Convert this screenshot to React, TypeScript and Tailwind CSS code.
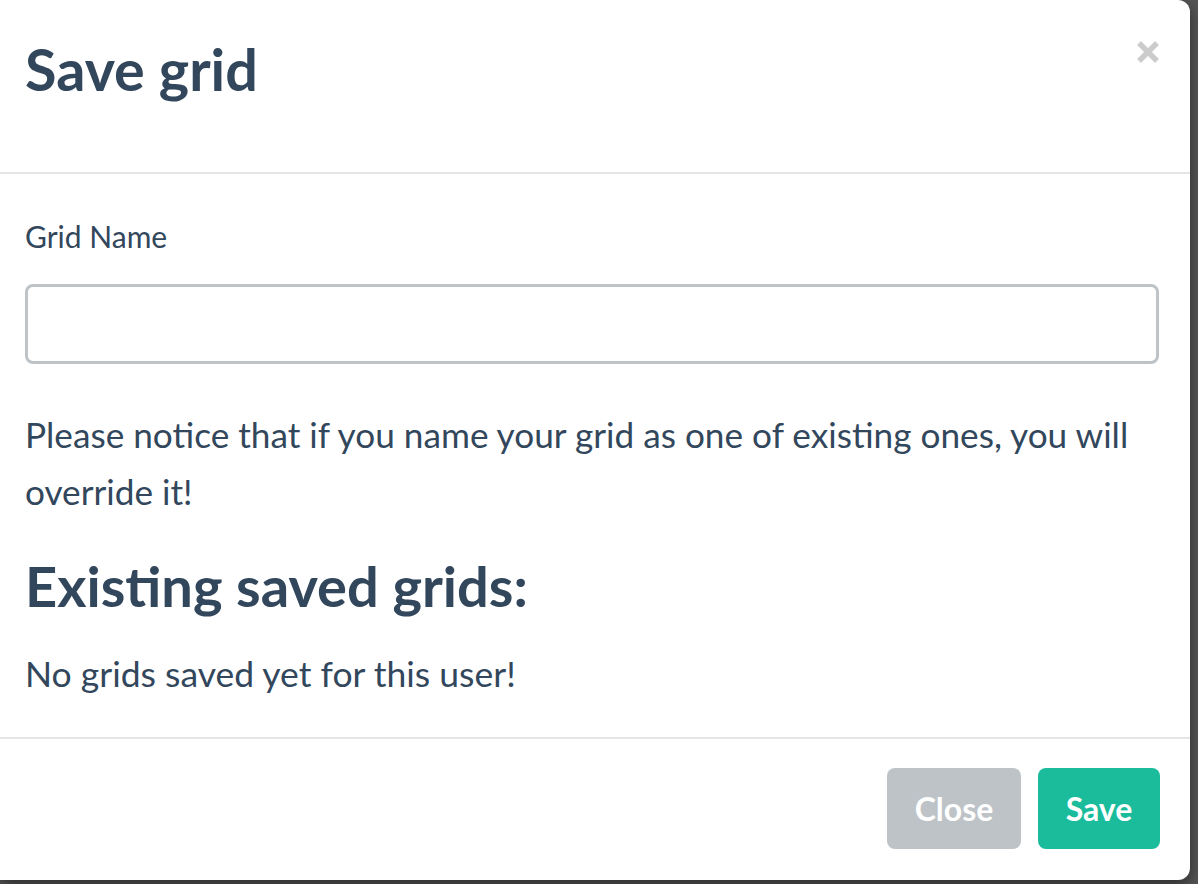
import React from "react";

const SaveGridModal: React.FC = () => {
  return (
    <div className="w-[1190px] h-[880px] bg-white rounded-tr-[12px] rounded-br-[12px] flex flex-col shadow-[0_5px_15px_rgba(0,0,0,0.5)] text-[#32475c] font-['Lato',sans-serif]">
      {/* Header */}
      <div className="h-[174px] shrink-0 border-b-2 border-[#e5e5e5] flex items-start justify-between pl-[25px] pr-[30px]">
        <h4 className="pt-[34px] text-[57.5px] leading-[1.2] font-bold">Save grid</h4>
        <button className="mt-[40px] w-[24px] h-[24px] flex items-center justify-center" aria-label="Close">
          <svg width="24" height="24" viewBox="0 0 24 24">
            <path d="M3 3 L21 21 M21 3 L3 21" stroke="#cccccc" strokeWidth="5.5" />
          </svg>
        </button>
      </div>

      {/* Body */}
      <div className="flex-1 pl-[25px] pr-[31px] pt-[44px]">
        <label className="block text-[30px] leading-[36px]">Grid Name</label>
        <input
          type="text"
          className="block w-full mt-[30px] h-[80px] border-[3px] border-[#bdc3c7] rounded-[8px] px-[24px] text-[31px] outline-none"
        />
        <p className="mt-[42px] text-[35.2px] leading-[57px]">
          Please notice that if you name your grid as one of existing ones, you will override it!
        </p>
        <h3 className="mt-[32px] text-[56px] leading-[1.2] font-bold">Existing saved grids:</h3>
        <p className="mt-[26px] text-[35.5px] leading-[57px]">No grids saved yet for this user!</p>
      </div>

      {/* Footer */}
      <div className="h-[143px] shrink-0 border-t-2 border-[#e5e5e5] flex items-start justify-end gap-[17px] pt-[29px] pr-[30px]">
        <button className="w-[134px] h-[81px] rounded-[8px] bg-[#bdc3c7] text-white text-[32px] font-bold">
          Close
        </button>
        <button className="w-[122px] h-[81px] rounded-[8px] bg-[#1abc9c] text-white text-[32px] font-bold">
          Save
        </button>
      </div>
    </div>
  );
};

export default function App() {
  return (
    <div className="w-[1198px] h-[884px] bg-[#555555] overflow-hidden">
      <SaveGridModal />
    </div>
  );
}
